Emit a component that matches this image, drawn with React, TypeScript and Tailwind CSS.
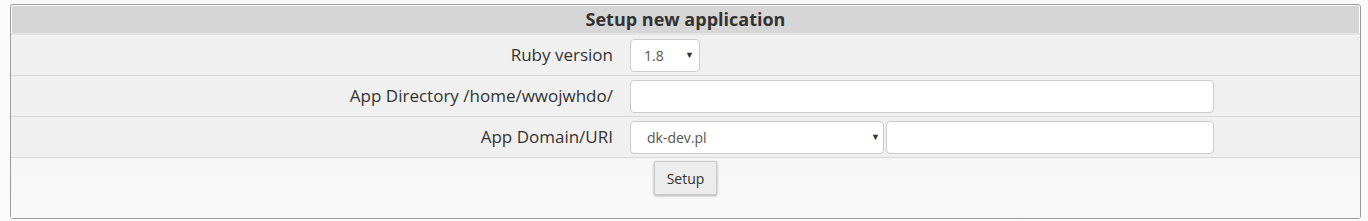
export default function App() {
  const font = { fontFamily: '"Open Sans", "Liberation Sans", sans-serif' }
  return (
    <div className="w-[1368px] h-[221px] bg-[#fafafa] pt-[4px] pl-[10px]" style={font}>
      <div className="w-[1351px] h-[215px] border border-[#9a9a9a] rounded-[3px] bg-white flex flex-col">
        {/* header */}
        <div className="mt-px mx-px h-[27px] bg-[#d6d6d6] flex items-center justify-center text-[18px] font-bold text-[#333]">
          Setup new application
        </div>
        <div className="h-[2px] bg-[#e3e3e3]" />

        {/* ruby version */}
        <div className="h-[41px] bg-[#f0f0f0] border-b border-[#d9d9d9] flex items-center">
          <div className="w-[619px] text-right pr-[17px] text-[17px] text-[#333]">Ruby version</div>
          <div className="relative w-[70px] h-[33px] bg-white border border-[#cccccc] rounded-[4px] flex items-center pl-[13px] text-[14px] text-[#555]">
            1.8
            <span className="absolute right-[5px] top-[8px] text-[9px] text-[#333]">▼</span>
          </div>
        </div>

        {/* app directory */}
        <div className="h-[41px] bg-[#f0f0f0] border-b border-[#d9d9d9] flex items-center">
          <div className="w-[619px] text-right pr-[17px] text-[17px] text-[#333]">App Directory /home/wwojwhdo/</div>
          <div className="w-[584px] h-[33px] bg-white border border-[#cccccc] rounded-[4px]" />
        </div>

        {/* domain */}
        <div className="h-[41px] bg-[#f0f0f0] border-b border-[#d9d9d9] flex items-center">
          <div className="w-[619px] text-right pr-[17px] text-[17px] text-[#333]">App Domain/URI</div>
          <div className="relative w-[254px] h-[33px] bg-white border border-[#cccccc] rounded-[4px] flex items-center pl-[16px] text-[14px] text-[#555]">
            dk-dev.pl
            <span className="absolute right-[3px] top-[8px] text-[9px] text-[#333]">▼</span>
          </div>
          <div className="ml-[2px] w-[328px] h-[33px] bg-white border border-[#cccccc] rounded-[4px]" />
        </div>

        {/* submit */}
        <div className="flex-1 bg-gradient-to-b from-[#f7f7f7] to-[#f9f9f9] flex justify-center pt-[3px]">
          <button className="h-[34px] px-[12px] bg-[#ececec] border border-[#c8c8c8] rounded-[2px] shadow-[0_1px_3px_rgba(0,0,0,0.3)] text-[14px] text-[#333]">
            Setup
          </button>
        </div>
      </div>
    </div>
  )
}
